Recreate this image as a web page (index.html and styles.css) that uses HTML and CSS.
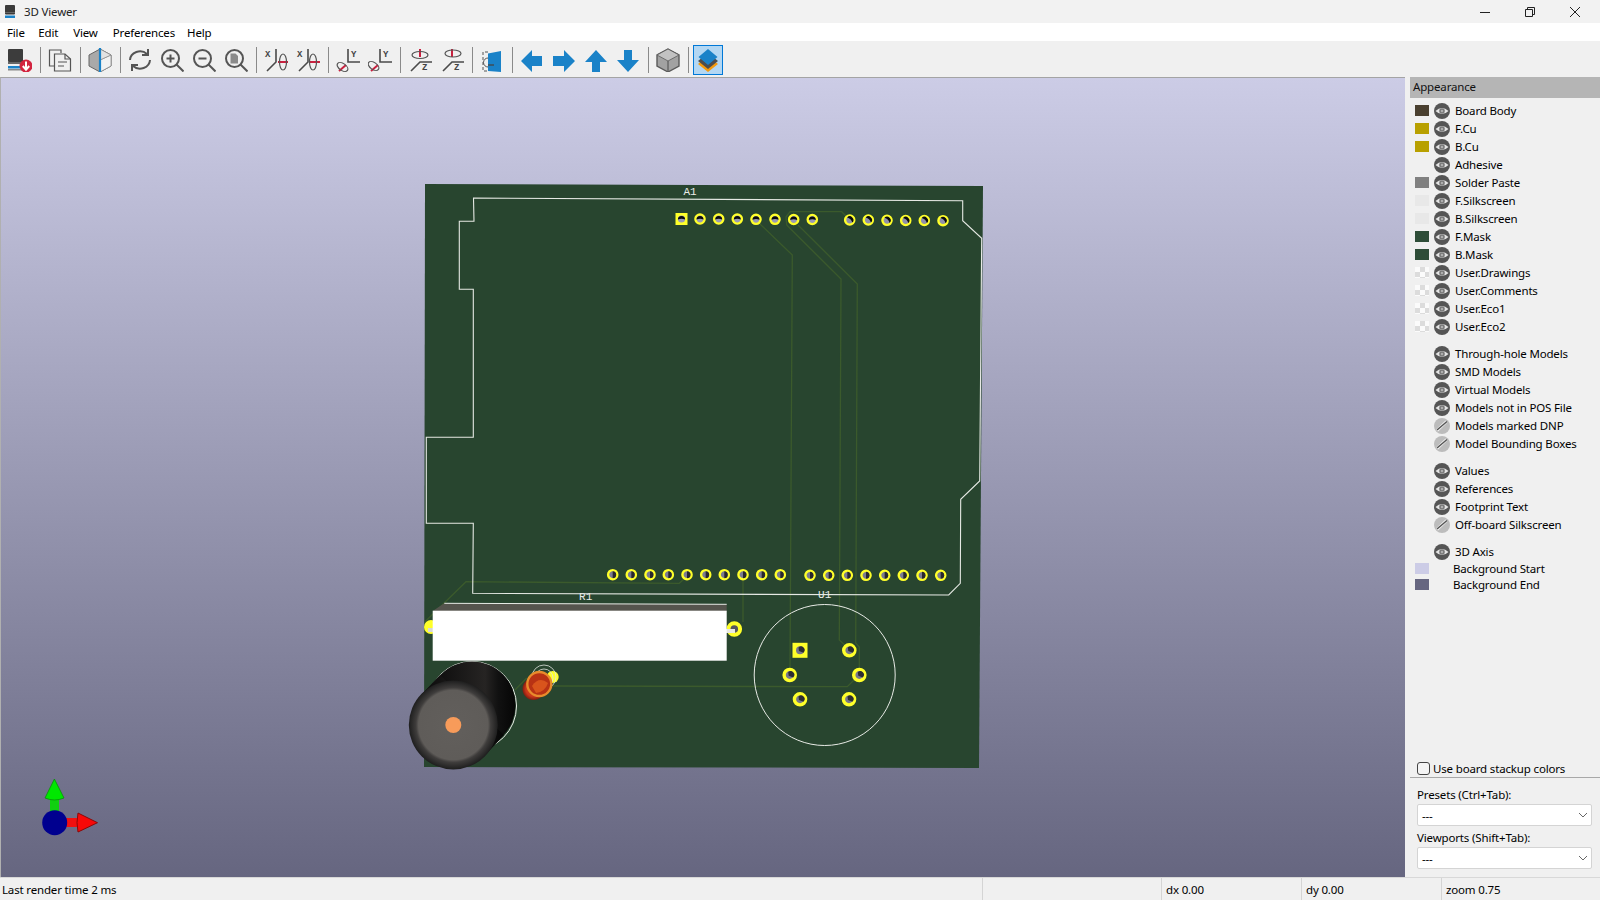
FILE: index.html
```html
<!DOCTYPE html>
<html lang="en">
<head>
<meta charset="utf-8">
<title>3D Viewer</title>
<link rel="stylesheet" href="styles.css">
</head>
<body>
<div class="app">
  <header class="titlebar">
    <svg class="appicon" viewBox="0 0 11 14" width="11" height="14"><rect x="0" y="0" width="10" height="9.500" rx="1" fill="#3a3a3a"/><rect x="0" y="7" width="10" height="1" fill="#666"/><rect x="0" y="10.500" width="10" height="2.500" fill="#1a82c8"/></svg>
    <span class="title">3D Viewer</span>
    <div class="winbtns">
      <svg width="12" height="12" viewBox="0 0 12 12"><path d="M1 6.500H11" class="wc"/></svg>
      <svg width="12" height="12" viewBox="0 0 12 12"><path d="M1.500 3.500H8.500V10.500H1.500ZM3.500 3.500V1.500H10.500V8.500H8.500" class="wc"/></svg>
      <svg width="12" height="12" viewBox="0 0 12 12"><path d="M1 1L11 11M11 1L1 11" class="wc"/></svg>
    </div>
  </header>
  <nav class="menubar">
    <span class="m1">File</span><span class="m2">Edit</span><span class="m3">View</span><span class="m4">Preferences</span><span class="m5">Help</span>
  </nav>
  <div class="toolbar">
    <button class="tb"><svg viewBox="0 0 24 24"><rect x="0" y="1" width="15" height="13" rx="1" fill="#3c3c3c"/><rect x="0" y="14" width="15" height="2" fill="#666"/><rect x="0" y="18" width="14" height="2.500" fill="#1a82c8"/><rect x="0" y="21" width="14" height="1.500" fill="#888"/><circle cx="18" cy="18" r="6.500" fill="#d2233f"/><path d="M18 13.500V21M14.800 18L18 21.800L21.200 18" fill="none" stroke="#fff" stroke-width="2"/></svg></button>
    <i class="sep"></i>
    <button class="tb"><svg viewBox="0 0 24 24"><path d="M13 5V2H1.500V18H6" class="ln1"/><path d="M6.500 6H17L22.500 11V23H6.500Z" class="ln1"/><path d="M17 6V11H22.500M10 14H19M10 18H16" class="ln1"/></svg></button>
    <i class="sep"></i>
    <button class="tb"><svg viewBox="0 0 24 24"><path d="M12 1L23 7V18L12 24L1 18V7Z" fill="#a9a9a9" stroke="#666"/><path d="M12 12L23 7V18L12 24Z" fill="#f2f2f2" stroke="#888" stroke-width=".7"/><path d="M12 1L23 7L12 12Z" fill="#e2e2e2" stroke="#888" stroke-width=".7"/><path d="M12 0V24" stroke="#1a82c8" stroke-width="2.200"/></svg></button>
    <i class="sep"></i>
    <button class="tb"><svg viewBox="0 0 24 24"><path d="M2 12A10 9 0 0 1 19 6" class="ln2"/><path d="M22 12A10 9 0 0 1 5 18" class="ln2"/><path d="M20 1V7H14M4 23V17H10" class="ln2"/></svg></button>
    <button class="tb"><svg viewBox="0 0 24 24"><use href="#lens"/><path d="M10.500 6.500V14.500M6.500 10.500H14.500" class="ln2"/></svg></button>
    <button class="tb"><svg viewBox="0 0 24 24"><use href="#lens"/><path d="M6.500 10.500H14.500" class="ln2"/></svg></button>
    <button class="tb"><svg viewBox="0 0 24 24"><use href="#lens"/><path d="M6.500 5.500H11.500L14 8V15.500H6.500Z" fill="#8a8a8a"/></svg></button>
    <i class="sep"></i>
    <button class="tb"><svg viewBox="0 0 24 24"><text x="1" y="9" class="axl">X</text><path d="M12 1V14L3 23" class="ln1b"/><path d="M14 14H24" class="red"/><ellipse cx="19" cy="14" rx="3.500" ry="8" class="ln1"/></svg></button>
    <button class="tb"><svg viewBox="0 0 24 24"><text x="1" y="9" class="axl">X</text><path d="M12 1V14L3 23" class="ln1b"/><path d="M14 14H24" class="red"/><ellipse cx="17" cy="14" rx="3.500" ry="8" class="ln1"/></svg></button>
    <i class="sep"></i>
    <button class="tb"><svg viewBox="0 0 24 24"><text x="15" y="9" class="axl">Y</text><path d="M12 1V14H24" class="ln1b"/><path d="M3 23L10 17" class="red"/><ellipse cx="6.500" cy="19" rx="6" ry="3.500" transform="rotate(35 6.500 19)" class="ln1"/></svg></button>
    <button class="tb"><svg viewBox="0 0 24 24"><text x="15" y="9" class="axl">Y</text><path d="M12 1V14H24" class="ln1b"/><path d="M3 23L10 17" class="red"/><ellipse cx="5.500" cy="18" rx="6" ry="3.500" transform="rotate(35 5.500 18)" class="ln1"/></svg></button>
    <i class="sep"></i>
    <button class="tb"><svg viewBox="0 0 24 24"><text x="14" y="21.500" class="axl">Z</text><path d="M3 23L12 14H24" class="ln1b"/><path d="M12 1V9" class="red"/><ellipse cx="12" cy="7" rx="8" ry="3.500" class="ln1"/></svg></button>
    <button class="tb"><svg viewBox="0 0 24 24"><text x="14" y="21.500" class="axl">Z</text><path d="M3 23L12 14H24" class="ln1b"/><path d="M12 1V9" class="red"/><ellipse cx="13" cy="5.500" rx="8" ry="3.500" class="ln1"/></svg></button>
    <i class="sep"></i>
    <button class="tb"><svg viewBox="0 0 24 24"><path d="M8 4H3V23H8" fill="none" stroke="#555" stroke-dasharray="3 2"/><path d="M8 5.500L21 3V24L8 23Z" fill="#1a82c8"/><path d="M8 10A4 4 0 0 0 8 19" fill="none" stroke="#555"/><path d="M8 17H14" stroke="#444" stroke-width="1.300"/></svg></button>
    <i class="sep"></i>
    <button class="tb"><svg viewBox="0 0 24 24"><path d="M1 13L12 2V8H22V18H12V24Z" class="arrow"/></svg></button>
    <button class="tb"><svg viewBox="0 0 24 24"><path d="M23 13L12 2V8H1V18H12V24Z" class="arrow"/></svg></button>
    <button class="tb"><svg viewBox="0 0 24 24"><path d="M12 2L23 14H16V24H8V14H1Z" class="arrow"/></svg></button>
    <button class="tb"><svg viewBox="0 0 24 24"><path d="M12 24L23 12H16V2H8V12H1Z" class="arrow"/></svg></button>
    <i class="sep"></i>
    <button class="tb"><svg viewBox="0 0 24 24"><path d="M12 1L23 7V18L12 24L1 18V7Z" fill="#a2a2a2" stroke="#5a5a5a" stroke-width="1.400"/><path d="M12 1L23 7L12 13L1 7Z" fill="#c2c2c2" stroke="#5a5a5a" stroke-width=".8"/><path d="M12 13V24" stroke="#5a5a5a" stroke-width="1.200"/></svg></button>
    <i class="sep"></i>
    <button class="tb on"><svg viewBox="0 0 24 24"><path d="M12 8L22 16L12 24L2 16Z" fill="#f59a0b"/><path d="M12 5L22 13L12 21L2 13Z" fill="#4d4d4d"/><path d="M12 1L21.500 9L12 17L2.500 9Z" fill="#1a82c8"/></svg></button>
  </div>

  <main class="main">
    <div class="canvas">
      <svg class="scene" viewBox="1 78 1404 799" width="1404" height="799">
        <defs>
          <symbol id="lens" viewBox="0 0 24 24"><circle cx="10.500" cy="10.500" r="8.500" fill="none" stroke="#555" stroke-width="2"/><path d="M16.500 16.500L23.500 23.500" fill="none" stroke="#555" stroke-width="2"/></symbol>
          <symbol id="eye" viewBox="-8 -8 16 16"><circle r="8" fill="#555"/><path d="M-6.500 0Q0 -6.200 6.500 0Q0 6.200 -6.500 0Z" fill="#e4e4e4"/><circle r="2.800" fill="#7a7a7a"/><circle r="1.200" fill="#b0b0b0"/></symbol>
          <symbol id="eyeoff" viewBox="-8 -8 16 16"><circle r="8" fill="#bcbcbc"/><path d="M-5 4.500L4.500 -4.500" stroke="#f2f2f2" stroke-width="3"/><path d="M-5 4L5 -4.500" stroke="#555" stroke-width="1.500"/></symbol>
          <g id="pt"><circle r="4.600" fill="#9a9ab6" stroke="#ffff2a" stroke-width="2.400"/><path d="M-3.500 .5A3.500 3.500 0 0 1 3.500 .5Q0 -1 -3.500 .5Z" fill="#0b0b0b"/></g>
          <g id="pr"><circle r="4.600" fill="#9090aa" stroke="#ffff2a" stroke-width="2.400"/><path d="M-2.600 -2.600A3.500 3.500 0 0 1 2.600 2.600Q1.500 -1.500 -2.600 -2.600Z" fill="#0b0b0b"/></g>
          <g id="pb"><circle r="4.600" fill="#7b7b90" stroke="#ffff2a" stroke-width="2.400"/><path d="M0 -3.500A3.500 3.500 0 0 1 0 3.500Z" fill="#27272c"/></g>
          <g id="pu"><circle r="5.600" fill="#77778c" stroke="#ffff2a" stroke-width="3.400"/><path d="M-1.500 -2.800A3.600 3.600 0 0 1 3.500 2.400L-1 .8Z" fill="#2c2c31"/></g>
          <radialGradient id="face"><stop offset="0" stop-color="#625f5c"/><stop offset=".78" stop-color="#5f5c59"/><stop offset=".84" stop-color="#3f3d3c"/><stop offset="1" stop-color="#1e1e1e"/></radialGradient>
          <linearGradient id="hull" x1="0" y1="0" x2="1" y2="0"><stop offset="0" stop-color="#0a0a0a"/><stop offset=".65" stop-color="#262423"/><stop offset=".8" stop-color="#111"/><stop offset="1" stop-color="#050505"/></linearGradient>
          <radialGradient id="led"><stop offset="0" stop-color="#e9561d"/><stop offset=".7" stop-color="#c8361a"/><stop offset="1" stop-color="#7f1c10"/></radialGradient>
        </defs>

        <polygon points="425,184 983,186 979,768 424,767" class="board"/>

        <g class="track">
          <path d="M760 224L792.300 255L790 670"/>
          <path d="M786.700 225L841 279L839.300 640L848 648"/>
          <path d="M798 225L857.300 284L855.700 643L859.300 647V672"/>
          <path d="M786.700 225L786 217L790 211.700H841.700L848 218"/>
          <path d="M553 686L847.300 686.700L859 675"/>
          <path d="M743 575V622"/>
          <path d="M685 578L679.300 583.300L466 581.700L425 621.700"/>
          <path d="M515 690L526.700 678"/>
        </g>

        <path d="M473.500 198L962.700 200.700V220.700L981.700 238.300L979.700 481L960.700 499.300L960.300 583.300L948.700 595L472.700 593.300L473.300 523.300H426.300V437.300H473.300V289.300H459.300V221.300H474Z" class="outline"/>
        <circle cx="824.700" cy="675" r="70.500" class="silk"/>
        <text x="690" y="195" class="ref">A1</text>
        <text x="585.700" y="600" class="ref">R1</text>
        <text x="824.700" y="598" class="ref">U1</text>

        <rect x="675.500" y="213" width="12" height="12" class="pad"/>
        <circle cx="681.500" cy="219" r="3.600" fill="#9a9ab6"/>
        <path d="M677.900 219.500A3.600 3.600 0 0 1 685.100 219.500Q681.500 218 677.900 219.500Z" fill="#0b0b0b"/>
        <use href="#pt" x="700" y="219"/><use href="#pt" x="718.700" y="219"/><use href="#pt" x="737.300" y="219"/><use href="#pt" x="756" y="219.300"/><use href="#pt" x="775" y="219.300"/><use href="#pt" x="793.700" y="219.500"/><use href="#pt" x="812.300" y="219.500"/>
        <use href="#pr" x="849.700" y="220"/><use href="#pr" x="868.300" y="220"/><use href="#pr" x="887" y="220.300"/><use href="#pr" x="905.700" y="220.500"/><use href="#pr" x="924.300" y="220.500"/><use href="#pr" x="943" y="220.700"/>

        <use href="#pb" x="612.700" y="574.700"/><use href="#pb" x="631.300" y="574.700"/><use href="#pb" x="650" y="574.700"/><use href="#pb" x="668.300" y="574.700"/><use href="#pb" x="687" y="574.700"/><use href="#pb" x="705.700" y="574.700"/><use href="#pb" x="724.300" y="574.700"/><use href="#pb" x="743" y="574.700"/><use href="#pb" x="761.700" y="574.700"/><use href="#pb" x="780.300" y="574.700"/>
        <use href="#pb" x="810" y="575.300"/><use href="#pb" x="828.700" y="575.300"/><use href="#pb" x="847.300" y="575.300"/><use href="#pb" x="866" y="575.300"/><use href="#pb" x="884.700" y="575.300"/><use href="#pb" x="903.300" y="575.300"/><use href="#pb" x="922" y="575.300"/><use href="#pb" x="940.700" y="575.300"/>

        <rect x="792.500" y="642.800" width="15" height="15" class="pad"/>
        <circle cx="800" cy="650.300" r="4" fill="#77778c"/>
        <path d="M798.500 647.500A3.600 3.600 0 0 1 803.500 652.700L799 651.100Z" fill="#2c2c31"/>
        <use href="#pu" x="849.300" y="650.300"/><use href="#pu" x="789.700" y="675"/><use href="#pu" x="859.300" y="675"/><use href="#pu" x="800" y="699.300"/><use href="#pu" x="849" y="699.300"/>

        <circle cx="431" cy="627" r="7" class="pad"/>
        <circle cx="734.300" cy="629" r="5.800" fill="#55555f" stroke="#ffff2a" stroke-width="4"/>
        <path d="M726 631H735" stroke="#e8e8e4" stroke-width="4"/>
        <path d="M428 630H434" stroke="#d8d8d4" stroke-width="4"/>
        <polygon points="444.300,603.300 726.700,604.300 726.700,612 432.700,611" class="resback"/>
        <path d="M444.300 603.300L726.700 604.300" class="silkline"/>
        <rect x="432.700" y="610.700" width="294" height="50" class="res"/>

        <circle cx="552.700" cy="677" r="6" class="pad"/>
        <circle cx="544" cy="677" r="12" class="silkthin"/>
        <circle cx="544" cy="678" r="9" class="silkthin"/>
        <circle cx="533.500" cy="689" r="11" fill="url(#led)"/>
        <circle cx="539.300" cy="684" r="12" fill="#b83214" stroke="#e88b2c" stroke-width="2.400"/>
        <path d="M532 686Q539 676 548 683Q545 692 536 693Z" fill="#d9541c"/>

        <circle cx="472" cy="706" r="44.500" class="silk"/>
        <circle cx="472" cy="705" r="43.500" fill="url(#hull)"/>
        <polygon points="421,695 440,675 504,735 485.400,755" fill="url(#hull)"/>
        <circle cx="453.300" cy="725" r="44.500" fill="url(#face)"/>
        <circle cx="453.300" cy="725" r="8" fill="#f79b5a"/>

        <path d="M50 797H59V812H50Z" fill="#10d010"/>
        <path d="M54.400 779L64 798Q54.400 802 45 798Z" fill="#00e800" stroke="#089008" stroke-width=".8"/>
        <path d="M66 818H80V827H66Z" fill="#f01010"/>
        <path d="M97.500 822.700L78 813Q76 822.700 78 832Z" fill="#f80808" stroke="#8a0808" stroke-width="1"/>
        <circle cx="54.700" cy="822.700" r="12.500" fill="#00008f"/>
      </svg>
    </div>

    <aside class="panel">
      <div class="phead">Appearance</div>
      <div class="layers">
        <div class="row"><i class="sw body"></i><svg class="eye"><use href="#eye"/></svg><span>Board Body</span></div>
        <div class="row"><i class="sw cu"></i><svg class="eye"><use href="#eye"/></svg><span>F.Cu</span></div>
        <div class="row"><i class="sw cu"></i><svg class="eye"><use href="#eye"/></svg><span>B.Cu</span></div>
        <div class="row"><i class="sw"></i><svg class="eye"><use href="#eye"/></svg><span>Adhesive</span></div>
        <div class="row"><i class="sw paste"></i><svg class="eye"><use href="#eye"/></svg><span>Solder Paste</span></div>
        <div class="row"><i class="sw silkc"></i><svg class="eye"><use href="#eye"/></svg><span>F.Silkscreen</span></div>
        <div class="row"><i class="sw silkc"></i><svg class="eye"><use href="#eye"/></svg><span>B.Silkscreen</span></div>
        <div class="row"><i class="sw mask"></i><svg class="eye"><use href="#eye"/></svg><span>F.Mask</span></div>
        <div class="row"><i class="sw mask"></i><svg class="eye"><use href="#eye"/></svg><span>B.Mask</span></div>
        <div class="row"><i class="sw chk"></i><svg class="eye"><use href="#eye"/></svg><span>User.Drawings</span></div>
        <div class="row"><i class="sw chk"></i><svg class="eye"><use href="#eye"/></svg><span>User.Comments</span></div>
        <div class="row"><i class="sw chk"></i><svg class="eye"><use href="#eye"/></svg><span>User.Eco1</span></div>
        <div class="row"><i class="sw chk"></i><svg class="eye"><use href="#eye"/></svg><span>User.Eco2</span></div>
        <div class="row gap"><i class="sw"></i><svg class="eye"><use href="#eye"/></svg><span>Through-hole Models</span></div>
        <div class="row"><i class="sw"></i><svg class="eye"><use href="#eye"/></svg><span>SMD Models</span></div>
        <div class="row"><i class="sw"></i><svg class="eye"><use href="#eye"/></svg><span>Virtual Models</span></div>
        <div class="row"><i class="sw"></i><svg class="eye"><use href="#eye"/></svg><span>Models not in POS File</span></div>
        <div class="row"><i class="sw"></i><svg class="eye"><use href="#eyeoff"/></svg><span>Models marked DNP</span></div>
        <div class="row"><i class="sw"></i><svg class="eye"><use href="#eyeoff"/></svg><span>Model Bounding Boxes</span></div>
        <div class="row gap"><i class="sw"></i><svg class="eye"><use href="#eye"/></svg><span>Values</span></div>
        <div class="row"><i class="sw"></i><svg class="eye"><use href="#eye"/></svg><span>References</span></div>
        <div class="row"><i class="sw"></i><svg class="eye"><use href="#eye"/></svg><span>Footprint Text</span></div>
        <div class="row"><i class="sw"></i><svg class="eye"><use href="#eyeoff"/></svg><span>Off-board Silkscreen</span></div>
        <div class="row gap"><i class="sw"></i><svg class="eye"><use href="#eye"/></svg><span>3D Axis</span></div>
        <div class="row bgrow"><i class="sw bgs"></i><span>Background Start</span></div>
        <div class="row bgrow"><i class="sw bge"></i><span>Background End</span></div>
      </div>
      <div class="stack"><i class="check"></i><span>Use board stackup colors</span></div>
      <div class="presets">
        <div class="lbl">Presets (Ctrl+Tab):</div>
        <div class="combo"><span>---</span><svg width="10" height="6" viewBox="0 0 10 6"><path d="M1 1L5 5L9 1" class="chev"/></svg></div>
        <div class="lbl second">Viewports (Shift+Tab):</div>
        <div class="combo"><span>---</span><svg width="10" height="6" viewBox="0 0 10 6"><path d="M1 1L5 5L9 1" class="chev"/></svg></div>
      </div>
    </aside>
  </main>

  <footer class="status">
    <div class="f f0">Last render time 2 ms</div>
    <div class="f f1"></div>
    <div class="f f2">dx 0.00</div>
    <div class="f f3">dy 0.00</div>
    <div class="f f4">zoom 0.75</div>
  </footer>
</div>
</body>
</html>
```

FILE: styles.css
```css
* { box-sizing: border-box; }
html, body { margin: 0; padding: 0; }
body { width: 1600px; height: 900px; overflow: hidden; font: 11.5px "Noto Sans", sans-serif; letter-spacing: -0.16px; color: #000; background: #f0f0f0; }
.app { display: flex; flex-direction: column; height: 900px; }

.titlebar { height: 23px; background: #f2f2f2; display: flex; align-items: center; padding-left: 5px; }
.appicon { margin-right: 8px; }
.title { color: #222; }
.winbtns { margin-left: auto; display: flex; gap: 33px; padding-right: 19px; }
.wc { fill: none; stroke: #222; stroke-width: 1; }

.menubar { height: 18px; background: #fff; display: flex; align-items: center; }
.m1 { margin-left: 7px; }
.m2 { margin-left: 13.5px; }
.m3 { margin-left: 15px; }
.m4 { margin-left: 15px; }
.m5 { margin-left: 12px; }

.toolbar { height: 36px; background: #f0f0f0; display: flex; align-items: center; padding: 2px 0 0 4px; }
.tb { width: 32px; height: 30px; padding: 0; border: 0; background: none; display: flex; align-items: center; justify-content: center; }
.tb svg { width: 24px; height: 24px; display: block; }
.tb.on { width: 30px; margin: 0 1px; background: #b3d7f3; border: 1px solid #0078d7; }
.sep { width: 8px; height: 26px; display: flex; justify-content: center; }
.sep::before { content: ""; width: 1px; height: 100%; background: #8a8a8a; }
.ln1 { fill: none; stroke: #555; stroke-width: 1.2; }
.ln1b { fill: none; stroke: #4a4a4a; stroke-width: 1.6; }
.ln2 { fill: none; stroke: #555; stroke-width: 2; }
.red { fill: none; stroke: #c8213f; stroke-width: 2; }
.axl { font: bold 9px "Liberation Mono", monospace; letter-spacing: 0; fill: #444; }
.arrow { fill: #1a82c8; }

.main { height: 800px; display: flex; }
.canvas { width: 1405px; height: 800px; border-top: 1px solid #a4a4a4; border-left: 1px solid #b0b0b0; background: linear-gradient(#cccce6, #666680); }
.scene { display: block; }
.board { fill: #28452f; }
.track path { fill: none; stroke: #3b5a2c; stroke-width: 1.3; }
.outline { fill: none; stroke: #e6e9e4; stroke-width: 1.1; }
.silk { fill: none; stroke: #e8ebe6; stroke-width: 1; }
.silkthin { fill: none; stroke: #dfe3de; stroke-width: .8; }
.silkline { fill: none; stroke: #e8ebe6; stroke-width: 1; }
.ref { font: 11px "Liberation Mono", monospace; letter-spacing: 0; fill: #e9ece8; text-anchor: middle; }
.pad { fill: #ffff2a; }
.res { fill: #fff; }
.resback { fill: #55544d; }

.panel { width: 195px; height: 800px; padding-left: 5px; display: flex; flex-direction: column; background: #f0f0f0; }
.phead { height: 21px; background: #b5b5b5; padding-left: 3px; line-height: 20px; color: #111; }
.layers { padding-top: 4px; flex: 1; }
.row { height: 18px; display: flex; align-items: center; padding-left: 5px; }
.row.gap { margin-top: 9px; }
.row.bgrow { height: 16px; }
.row.bgrow span { margin-left: 24px; }
.row span { white-space: nowrap; margin-bottom: 2px; }
.sw { width: 14px; height: 11px; display: block; flex: none; margin-bottom: 1px; }
.eye { width: 16px; height: 16px; margin: 0 5px 0 5px; flex: none; }
.body { background: #4a4030; }
.cu { background: #b8a000; }
.paste { background: #808080; }
.silkc { background: #e8e8e8; }
.mask { background: #2e4d38; }
.chk { background: repeating-conic-gradient(#dcdcdc 0 25%, #fbfbfb 0 50%) 0 0 / 10px 10px; }
.bgs { background: #cccce6; }
.bge { background: #666680; }

.stack { height: 18px; border-bottom: 1px solid #a8a8a8; display: flex; align-items: center; padding: 0 0 0 7px; }
.check { width: 13px; height: 13px; border: 1px solid #444; border-radius: 3px; background: #f4f4f4; margin-right: 3px; }
.presets { padding: 9px 8px 8px 7px; height: 99px; }
.lbl { height: 15px; line-height: 15px; }
.lbl.second { margin-top: 4px; }
.combo { height: 22px; margin-top: 2px; background: #fff; border: 1px solid #d4d4d4; border-radius: 2px; display: flex; align-items: center; justify-content: space-between; padding: 0 3px 0 4px; }
.chev { fill: none; stroke: #666; stroke-width: 1; }

.status { height: 23px; display: flex; border-top: 1px solid #d8d8d8; background: #f0f0f0; }
.f { padding-left: 4px; line-height: 23px; white-space: nowrap; }
.f0 { width: 982px; padding-left: 2px; }
.f1 { width: 179px; border-left: 1px solid #d4d4d4; }
.f2 { width: 140px; border-left: 1px solid #d4d4d4; }
.f3 { width: 140px; border-left: 1px solid #d4d4d4; }
.f4 { width: 159px; border-left: 1px solid #d4d4d4; }
```
